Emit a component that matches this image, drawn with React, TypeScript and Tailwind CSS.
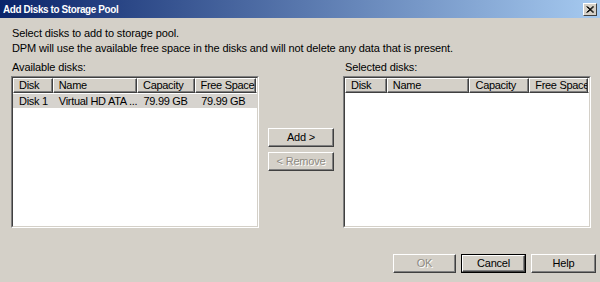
import React from "react";

const font = { fontFamily: "'Liberation Sans', Arial, sans-serif" };

function Header({ cols }: { cols: { label: string; w: string }[] }) {
  return (
    <div className="flex h-[15px] shrink-0">
      {cols.map((c) => (
        <div
          key={c.label}
          className={`${c.w} h-[15px] bg-[#d4d0c8] border-t border-l border-t-white border-l-white border-r border-b border-r-[#404040] border-b-[#404040] shadow-[inset_-1px_-1px_0_#808080] pl-[5px] leading-[13px] text-[11px] tracking-[-0.3px] text-black whitespace-nowrap overflow-hidden`}
        >
          {c.label}
        </div>
      ))}
      <div className="flex-1 h-[15px] bg-[#d4d0c8] border-t border-l border-t-white border-l-white border-b border-b-[#404040]" />
    </div>
  );
}

function ListBox({ cols, rows }: { cols: { label: string; w: string }[]; rows: string[][] }) {
  return (
    <div className="w-[248px] h-[152px] border-t border-l border-t-[#808080] border-l-[#808080] border-r border-b border-r-white border-b-white">
      <div className="w-full h-full border-t border-l border-t-[#404040] border-l-[#404040] border-r border-b border-r-[#d4d0c8] border-b-[#d4d0c8] bg-white flex flex-col overflow-hidden">
        <Header cols={cols} />
        {rows.map((r, i) => (
          <div key={i} className="flex h-[14px] bg-[#d6d3ce] mt-[1px]">
            {r.map((t, j) => (
              <div key={j} className={`${cols[j].w} pl-[6px] text-[11px] tracking-[-0.3px] leading-[14px] whitespace-nowrap overflow-hidden`}>
                {t}
              </div>
            ))}
          </div>
        ))}
      </div>
    </div>
  );
}

function Btn({ label, w, disabled, def }: { label: string; w: string; disabled?: boolean; def?: boolean }) {
  return (
    <div className={`${w} h-[19px] ${def ? "border border-black" : ""}`}>
      <div className="w-full h-full bg-[#d4d0c8] border-t border-l border-t-white border-l-white border-r border-b border-r-[#404040] border-b-[#404040] shadow-[inset_-1px_-1px_0_#808080] flex items-center justify-center text-[11px] tracking-[-0.2px]">
        <span className={disabled ? "text-[#8e8a82] [text-shadow:1px_1px_0_#ffffff]" : "text-black"}>{label}</span>
      </div>
    </div>
  );
}

export default function App() {
  const leftCols = [
    { label: "Disk", w: "w-[40px]" },
    { label: "Name", w: "w-[85px]" },
    { label: "Capacity", w: "w-[58px]" },
    { label: "Free Space", w: "w-[62px]" },
  ];
  const rightCols = [
    { label: "Disk", w: "w-[42px]" },
    { label: "Name", w: "w-[83px]" },
    { label: "Capacity", w: "w-[60px]" },
    { label: "Free Space", w: "w-[59px]" },
  ];
  return (
    <div className="w-[600px] h-[282px] bg-[#d4d0c8] flex flex-col overflow-hidden text-black" style={font}>
      <div className="h-[18px] shrink-0 flex items-center justify-between pl-[3px] pr-[3px] bg-[linear-gradient(to_right,#0a246a,#a6caf0)]">
        <span className="text-white font-bold text-[11px] tracking-[-0.4px] leading-[18px] scale-x-[0.9] origin-left">Add Disks to Storage Pool</span>
        <div className="w-[14px] h-[13px] bg-[#d4d0c8] border-t border-l border-t-white border-l-white border-r border-b border-r-[#404040] border-b-[#404040] flex items-center justify-center">
          <svg width="8" height="7" viewBox="0 0 8 7">
            <path d="M0.5 0.5 L7 6.5 M1.5 0.5 L8 6.5 M7 0.5 L0.5 6.5 M8 0.5 L1.5 6.5" stroke="#000" strokeWidth="1" />
          </svg>
        </div>
      </div>
      <div className="flex flex-col pl-[12px] pt-[8px] text-[11px] leading-[15px] tracking-[-0.12px]">
        <div>Select disks to add to storage pool.</div>
        <div>DPM will use the available free space in the disks and will not delete any data that is present.</div>
      </div>
      <div className="flex pl-[11px] mt-[5px]">
        <div className="flex flex-col">
          <div className="text-[11px] leading-[13px] tracking-[-0.12px] pl-[1px] mb-[2px]">Available disks:</div>
          <ListBox cols={leftCols} rows={[["Disk 1", "Virtual HD ATA ...", "79.99 GB", "79.99 GB"]]} />
        </div>
        <div className="w-[84px] flex flex-col items-center pt-[67px] gap-[5px]">
          <Btn label="Add >" w="w-[66px]" />
          <Btn label="< Remove" w="w-[66px]" disabled />
        </div>
        <div className="flex flex-col">
          <div className="text-[11px] leading-[13px] tracking-[-0.12px] pl-[2px] mb-[2px]">Selected disks:</div>
          <ListBox cols={rightCols} rows={[]} />
        </div>
      </div>
      <div className="flex justify-end gap-[5px] pr-[4px] mt-[26px]">
        <Btn label="OK" w="w-[63px]" disabled />
        <Btn label="Cancel" w="w-[65px]" def />
        <Btn label="Help" w="w-[65px]" />
      </div>
    </div>
  );
}
